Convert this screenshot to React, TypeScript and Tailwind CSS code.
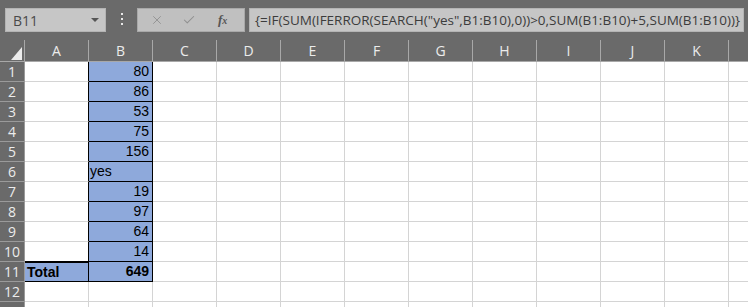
import { Check, X } from 'lucide-react'

const COLS = ['A', 'B', 'C', 'D', 'E', 'F', 'G', 'H', 'I', 'J', 'K', '']

const B_VALUES: (string | number)[] = [80, 86, 53, 75, 156, 'yes', 19, 97, 64, 14, 649]

const FORMULA = '{=IF(SUM(IFERROR(SEARCH("yes",B1:B10),0))>0,SUM(B1:B10)+5,SUM(B1:B10))}'

function TopBar() {
  return (
    <div className="flex h-[40px] items-start bg-[#6a6a6a] pt-[8px]">
      <div className="ml-[5px] flex h-[24px] w-[101px] items-center justify-between border border-[#b4b4b4] bg-[#c6c6c6] pl-[7px] pr-[6px]">
        <span className="text-[14px] text-[#4a4a4a]" style={{ fontFamily: '"Open Sans", sans-serif' }}>B11</span>
        <span className="h-0 w-0 border-x-[4px] border-t-[4px] border-x-transparent border-t-[#555]" />
      </div>
      <div className="ml-[15px] mt-[5px] flex flex-col gap-[3px]">
        <span className="h-[2px] w-[2px] bg-[#e8e8e8]" />
        <span className="h-[2px] w-[2px] bg-[#e8e8e8]" />
        <span className="h-[2px] w-[2px] bg-[#e8e8e8]" />
      </div>
      <div className="ml-[14px] flex h-[24px] w-[108px] items-center border border-[#a9a9a9] bg-[#c0c0c0]">
        <X className="ml-[12px] h-[14px] w-[14px] text-[#8f8f8f]" strokeWidth={1.5} />
        <Check className="ml-[18px] h-[14px] w-[14px] text-[#8f8f8f]" strokeWidth={1.8} />
        <span className="ml-[22px] text-[13px] font-bold italic text-[#555]" style={{ fontFamily: '"Liberation Serif", serif' }}>
          f<span className="text-[10px]">x</span>
        </span>
      </div>
      <div className="ml-[4px] flex h-[24px] w-[495px] items-center border border-[#b4b4b4] bg-[#c6c6c6] pl-[5px]">
        <span className="whitespace-nowrap text-[13.5px] text-[#3c3c3c]" style={{ fontFamily: '"Open Sans", sans-serif' }}>
          {FORMULA}
        </span>
      </div>
    </div>
  )
}

function HeaderRow() {
  return (
    <div className="flex h-[22px] bg-[#6a6a6a]">
      <div className="relative w-[25px] shrink-0 border-b border-r border-[#a8a8a8]">
        <svg className="absolute left-0 top-0" width="25" height="22" viewBox="0 0 25 22">
          <polygon points="22,7 22,20 11,20" fill="#ececec" />
        </svg>
      </div>
      {COLS.map((c, i) => (
        <div
          key={i}
          className="flex w-[64px] shrink-0 items-center justify-center border-b border-r border-[#a8a8a8] text-[14px] text-[#ececec]"
          style={{ fontFamily: '"Open Sans", sans-serif' }}
        >
          {c}
        </div>
      ))}
    </div>
  )
}

function Row({ n }: { n: number }) {
  const inTable = n <= 11
  const bValue = B_VALUES[n - 1]
  const isTotal = n === 11
  const isText = typeof bValue === 'string'

  return (
    <div className="flex h-[20px]">
      <div
        className="flex w-[25px] shrink-0 items-center justify-center border-b border-r border-[#9a9a9a] bg-[#6a6a6a] text-[14px] text-[#ececec]"
        style={{ fontFamily: '"Open Sans", sans-serif' }}
      >
        {n <= 12 ? n : null}
      </div>
      <div
        className={
          isTotal
            ? 'flex w-[64px] shrink-0 items-center border-y border-r border-black bg-[#8ea9db] pl-[2px] text-[14px] font-bold text-black'
            : n === 10
              ? 'w-[64px] shrink-0 border-b border-r border-b-black border-r-black bg-white'
              : inTable
                ? 'w-[64px] shrink-0 border-b border-r border-b-[#d4d4d4] border-r-black bg-white'
                : 'w-[64px] shrink-0 border-b border-r border-[#d4d4d4] bg-white'
        }
        style={{ fontFamily: '"Liberation Sans", sans-serif' }}
      >
        {isTotal ? 'Total' : null}
      </div>
      <div
        className={
          inTable
            ? isText
              ? 'flex w-[64px] shrink-0 items-center border-b border-r border-black bg-[#8ea9db] pl-[1px] text-[14px] text-black'
              : isTotal
                ? 'flex w-[64px] shrink-0 items-center justify-end border-b border-r border-black bg-[#8ea9db] pr-[3px] text-[14px] font-bold text-black'
                : 'flex w-[64px] shrink-0 items-center justify-end border-b border-r border-black bg-[#8ea9db] pr-[3px] text-[14px] text-black'
            : 'w-[64px] shrink-0 border-b border-r border-[#d4d4d4] bg-white'
        }
        style={{ fontFamily: '"Liberation Sans", sans-serif' }}
      >
        {inTable ? bValue : null}
      </div>
      {COLS.slice(2).map((_, i) => (
        <div key={i} className="w-[64px] shrink-0 border-b border-r border-[#d4d4d4] bg-white" />
      ))}
    </div>
  )
}

export default function App() {
  const rows = Array.from({ length: 13 }, (_, i) => i + 1)
  return (
    <div className="h-[307px] w-[748px] overflow-hidden bg-[#6a6a6a]">
      <TopBar />
      <HeaderRow />
      {rows.map((n) => (
        <Row key={n} n={n} />
      ))}
    </div>
  )
}
